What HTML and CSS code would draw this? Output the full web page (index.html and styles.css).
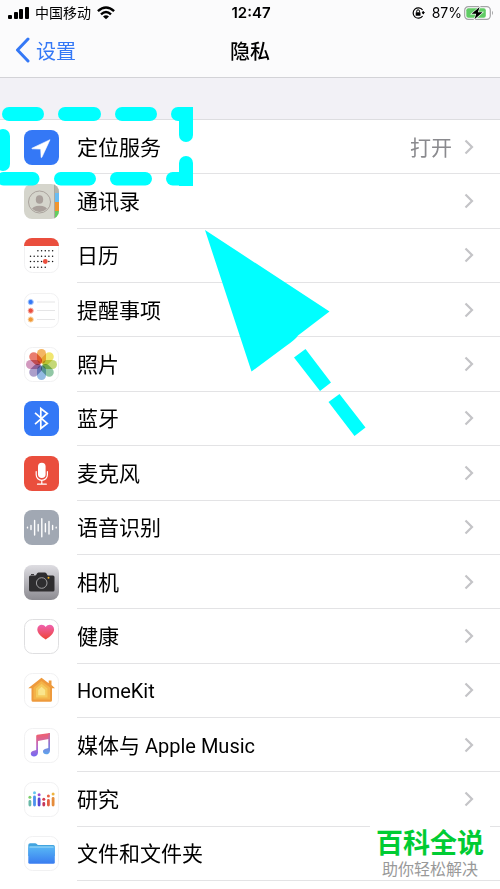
FILE: index.html
```html
<!DOCTYPE html>
<html lang="zh-CN">
<head>
<meta charset="utf-8">
<meta name="viewport" content="width=device-width, initial-scale=1">
<title>隐私</title>
<link rel="stylesheet" href="styles.css">
</head>
<body>
<div class="screen">
  <header class="top">
    <div class="status">
      <div class="status-left">
        <svg width="21" height="14" viewBox="0 0 21 14"><rect x="0" y="9" width="4" height="4" rx="1"/><rect x="6" y="6" width="4" height="7" rx="1"/><rect x="11" y="3" width="4" height="10" rx="1"/><rect x="17" y="1" width="4" height="12" rx="1"/></svg>
        <span class="carrier">中国移动</span>
        <svg width="18" height="14" viewBox="0 0 18 14" fill="none" stroke="#000" stroke-width="2.4"><path d="M.9 5.2Q9-2.4 17.1 5.2M4 8.4Q9 3.8 14 8.4"/><path d="M9 13.3L6 10.4Q9 8 12 10.4Z" fill="#000" stroke="none"/></svg>
      </div>
      <span class="clock">12:47</span>
      <div class="status-right">
        <svg width="13" height="12" viewBox="0 0 13 12"><path d="M10.6 3A5.2 5.2 0 1 0 10.6 9M11.2 7V4" fill="none" stroke="#000" stroke-width="1.2"/><path d="M9.6 5H13L11.3 7.5Z"/><rect x="3.7" y="5.2" width="4.8" height="3.6" rx=".5"/><path d="M4.7 5.4V4.2a1.4 1.4 0 0 1 2.8 0v1.2" fill="none" stroke="#000"/></svg>
        <span class="percent">87%</span>
        <svg width="30" height="14" viewBox="0 0 30 14"><rect x=".7" y=".7" width="25.6" height="12.6" rx="3.6" fill="#fff" stroke="#a4a4a6" stroke-width="1.2"/><rect x="2.3" y="2.3" width="19.5" height="9.4" rx="2" fill="#61cc65"/><path d="M28 4.8q2 2.2 0 4.4z" fill="#a4a4a6"/><path d="M15.6.9L7.600 7.800h4.600l-1.700 5.500 8-7h-4.600z" stroke="#fff" stroke-width="1.2" paint-order="stroke"/></svg>
      </div>
    </div>
    <nav class="nav">
      <a class="back" href="#"><svg width="15" height="26" viewBox="0 0 15 26"><path d="M13 2L2.5 13 13 24" fill="none" stroke="#3478f6" stroke-width="3" stroke-linecap="round" stroke-linejoin="round"/></svg><span>设置</span></a>
      <h1 class="title">隐私</h1>
    </nav>
  </header>

  <ul class="list">
    <li><a class="row" href="#">
      <svg class="icon" viewBox="0 0 35 35"><rect width="35" height="35" rx="8" fill="#3478f6"/><path d="M26 9.7L8 18.2q-.5.4.2.6l8.5.3.4 8.2q.3.8.8 0z" fill="#fff" stroke="#fff" stroke-width=".6" stroke-linejoin="round"/></svg>
      <span class="cell"><span class="label">定位服务</span><span class="value">打开</span><svg class="chevron" viewBox="0 0 10 16"><path d="M1.5 1.5L8 8l-6.500 6.500"/></svg></span></a></li>
    <li><a class="row" href="#">
      <svg class="icon" viewBox="0 0 35 35"><defs><clipPath id="tile"><rect width="35" height="35" rx="8"/></clipPath><clipPath id="face"><circle cx="15.500" cy="18" r="10"/></clipPath></defs><g clip-path="url(#tile)"><path fill="#d5d5cc" d="M0 0h35v35H0z"/><path fill="#b3b3aa" d="M30.500 0H35v9h-4.500z"/><path fill="#69bdf3" d="M31 9h4v9h-4z"/><path fill="#f1962f" d="M31 18h4v9h-4z"/><path fill="#65cd60" d="M31 27h4v8h-4z"/><path d="M30.500 0v35" stroke="#aaa9a0"/></g><circle cx="15.500" cy="18" r="11" fill="none" stroke="#aaa39d"/><g fill="#a9a09b" clip-path="url(#face)"><ellipse cx="15.500" cy="15.500" rx="3.700" ry="4.300"/><ellipse cx="15.500" cy="26.500" rx="8" ry="4.800"/></g></svg>
      <span class="cell"><span class="label">通讯录</span><svg class="chevron" viewBox="0 0 10 16"><path d="M1.5 1.5L8 8l-6.500 6.500"/></svg></span></a></li>
    <li><a class="row" href="#">
      <svg class="icon" viewBox="0 0 35 35"><rect class="tile" x=".5" y=".5" width="34" height="34" rx="8"/><path d="M0 8a8 8 0 0 1 8-8h19a8 8 0 0 1 8 8z" fill="#ea4e3d"/><g fill="none" stroke="#111" stroke-width="1.500" stroke-linecap="round" stroke-dasharray="0 3.680"><path d="M13.900 12.700h15M6.500 18.300h22.300M6.500 23.500h22.300M6.500 29.200h15"/></g><circle cx="21.300" cy="23.500" r="2.400" fill="#ea4e3d"/></svg>
      <span class="cell"><span class="label">日历</span><svg class="chevron" viewBox="0 0 10 16"><path d="M1.5 1.5L8 8l-6.500 6.500"/></svg></span></a></li>
    <li><a class="row" href="#">
      <svg class="icon" viewBox="0 0 35 35"><rect class="tile" x=".5" y=".5" width="34" height="34" rx="8"/><path d="M13 9h18M13 17.500h18M13 26.500h18" stroke="#dedee0" stroke-width=".8"/><g stroke-width="1"><circle cx="6.700" cy="9" r="2.600" fill="#3478f6" stroke="#a9c8fc"/><circle cx="6.700" cy="17.700" r="2.600" fill="#ea4e3d" stroke="#f7b8b1"/><circle cx="6.700" cy="26.500" r="2.600" fill="#f19a37" stroke="#fad7ae"/></g></svg>
      <span class="cell"><span class="label">提醒事项</span><svg class="chevron" viewBox="0 0 10 16"><path d="M1.5 1.5L8 8l-6.500 6.500"/></svg></span></a></li>
    <li><a class="row" href="#">
      <svg class="icon" viewBox="0 0 35 35"><rect class="tile" x=".5" y=".5" width="34" height="34" rx="8"/><g class="petals"><rect x="13" y="2" width="9" height="14.500" rx="4.500" fill="#f0a23b"/><rect x="13" y="2" width="9" height="14.500" rx="4.500" fill="#eee04c" transform="rotate(45 17.500 17.500)"/><rect x="13" y="2" width="9" height="14.500" rx="4.500" fill="#b5cf55" transform="rotate(90 17.500 17.500)"/><rect x="13" y="2" width="9" height="14.500" rx="4.500" fill="#75b98f" transform="rotate(135 17.500 17.500)"/><rect x="13" y="2" width="9" height="14.500" rx="4.500" fill="#78a9dc" transform="rotate(180 17.500 17.500)"/><rect x="13" y="2" width="9" height="14.500" rx="4.500" fill="#9686bd" transform="rotate(225 17.500 17.500)"/><rect x="13" y="2" width="9" height="14.500" rx="4.500" fill="#c77fae" transform="rotate(270 17.500 17.500)"/><rect x="13" y="2" width="9" height="14.500" rx="4.500" fill="#e45c4a" transform="rotate(315 17.500 17.500)"/></g></svg>
      <span class="cell"><span class="label">照片</span><svg class="chevron" viewBox="0 0 10 16"><path d="M1.5 1.5L8 8l-6.500 6.500"/></svg></span></a></li>
    <li><a class="row" href="#">
      <svg class="icon" viewBox="0 0 35 35"><rect width="35" height="35" rx="8" fill="#3478f6"/><path d="M11 11.800L23.300 22.500 16.800 27.500V7.500l6.500 5L11 23.200" fill="none" stroke="#fff" stroke-width="1.700"/></svg>
      <span class="cell"><span class="label">蓝牙</span><svg class="chevron" viewBox="0 0 10 16"><path d="M1.5 1.5L8 8l-6.500 6.500"/></svg></span></a></li>
    <li><a class="row" href="#">
      <svg class="icon" viewBox="0 0 35 35"><rect width="35" height="35" rx="8" fill="#ea4e3d"/><rect x="14" y="6.700" width="7.600" height="15.300" rx="3.800" fill="#fff"/><path d="M12.200 15.500v3.300a5.600 5.600 0 0 0 11.200 0v-3.300M17.800 24.500v3.700M13.500 28.200h8.800" fill="none" stroke="#fff" stroke-width="1.200" stroke-linecap="round"/></svg>
      <span class="cell"><span class="label">麦克风</span><svg class="chevron" viewBox="0 0 10 16"><path d="M1.5 1.5L8 8l-6.500 6.500"/></svg></span></a></li>
    <li><a class="row" href="#">
      <svg class="icon" viewBox="0 0 35 35"><rect width="35" height="35" rx="8" fill="#a1a8b3"/><path d="M3.500 17.300v.6M7 15.500v4M10.600 10.500v14.500M14.200 14.500v6.500M17.800 8.800v18M21.400 13.800v8M25 11.500v12.500M28.600 15.500v4M32.200 17.300v.6" stroke="#fff" stroke-width="1.400" stroke-linecap="round"/></svg>
      <span class="cell"><span class="label">语音识别</span><svg class="chevron" viewBox="0 0 10 16"><path d="M1.5 1.5L8 8l-6.500 6.500"/></svg></span></a></li>
    <li><a class="row" href="#">
      <svg class="icon" viewBox="0 0 35 35"><defs><linearGradient id="steel" x2="0" y2="1"><stop stop-color="#dedde2"/><stop offset="1" stop-color="#8c8b91"/></linearGradient></defs><rect width="35" height="35" rx="8" fill="url(#steel)"/><path d="M5 12q0-1.500 1.500-1.500h4.500q1.200 0 1.700-1.500t1.800-1.500h6.500q1.300 0 1.800 1.500t1.700 1.500h4.500q1.500 0 1.500 1.500v13q0 1.500-1.500 1.500h-22Q5 26.500 5 25z" fill="#2e2d2f"/><path d="M7 9.600h3" stroke="#2e2d2f"/><circle cx="17.700" cy="18" r="5.300" fill="none" stroke="#aaa9ac" stroke-width=".9"/><circle cx="24.500" cy="12.800" r="1" fill="#f2b01f"/></svg>
      <span class="cell"><span class="label">相机</span><svg class="chevron" viewBox="0 0 10 16"><path d="M1.5 1.5L8 8l-6.500 6.500"/></svg></span></a></li>
    <li><a class="row" href="#">
      <svg class="icon" viewBox="0 0 35 35"><defs><linearGradient id="heart" x2="0" y2="1"><stop stop-color="#ef62b0"/><stop offset="1" stop-color="#ee4434"/></linearGradient></defs><rect class="tile tile-strong" x=".5" y=".5" width="34" height="34" rx="8"/><path d="M21.700 20.500C17 17.500 13.300 14 13.300 10.500c0-5.200 6-6.300 8.400-2.500 2.400-3.800 8.400-2.700 8.400 2.500 0 3.500-3.700 7-8.400 10z" fill="url(#heart)"/></svg>
      <span class="cell"><span class="label">健康</span><svg class="chevron" viewBox="0 0 10 16"><path d="M1.5 1.5L8 8l-6.500 6.500"/></svg></span></a></li>
    <li><a class="row" href="#">
      <svg class="icon" viewBox="0 0 35 35"><rect class="tile" x=".5" y=".5" width="34" height="34" rx="8"/><path d="M17.500 4.700L4.200 15.300h3.300v12q0 1.500 1.500 1.500h17.500q1.500 0 1.500-1.500v-12h3L27.500 12V7.500h-2.800v2.800z" fill="#ee9a3c"/><path d="M17.500 8L9.500 14.500v12h16.500v-12z" fill="#f3b349"/><path d="M17.500 10.800L12 15.500v9h11.500v-9z" fill="#f6ca5c"/><path d="M17.500 13.700L14.200 17v5.200h7V17z" fill="#fae58c"/></svg>
      <span class="cell"><span class="label"><span class="latin">HomeKit</span></span><svg class="chevron" viewBox="0 0 10 16"><path d="M1.5 1.5L8 8l-6.500 6.500"/></svg></span></a></li>
    <li><a class="row" href="#">
      <svg class="icon" viewBox="0 0 35 35"><defs><linearGradient id="note" gradientUnits="userSpaceOnUse" x1="15" y1="5" x2="17" y2="29"><stop offset=".1" stop-color="#ec6075"/><stop offset=".55" stop-color="#b96cc9"/><stop offset="1" stop-color="#6d67f5"/></linearGradient><linearGradient id="note2" gradientUnits="userSpaceOnUse" x1="25" y1="5" x2="25" y2="27"><stop stop-color="#de6488"/><stop offset=".5" stop-color="#8c75d5"/><stop offset="1" stop-color="#58a9ef"/></linearGradient></defs><rect class="tile" x=".5" y=".5" width="34" height="34" rx="8"/><path d="M12.200 8q0-1 1-1.200L26 4.900v5.900l-12 2.300v11.500c0 5-7.200 5.200-7.200 1.200 0-3 3.500-2.700 5.400-3.700z" fill="url(#note)"/><path d="M24.300 5.200l1.700-.3v17.500c0 5-7 5-7 1.200 0-3 3.500-2.700 5.300-3.600z" fill="url(#note2)"/></svg>
      <span class="cell"><span class="label">媒体与<span class="latin"> Apple Music</span></span><svg class="chevron" viewBox="0 0 10 16"><path d="M1.5 1.5L8 8l-6.500 6.500"/></svg></span></a></li>
    <li><a class="row" href="#">
      <svg class="icon" viewBox="0 0 35 35"><rect class="tile" x=".5" y=".5" width="34" height="34" rx="8"/><g stroke-width="2.800" stroke-linecap="round"><path d="M5.900 19.500v3.500" stroke="#69b9a8"/><path d="M10.500 15v8" stroke="#4c90ed"/><path d="M15.100 17v6" stroke="#5948d2"/><path d="M19.800 21.500v1.500" stroke="#c4355a"/><path d="M24.400 18.500v4.500" stroke="#e36043"/><path d="M29.100 16.500v6.500" stroke="#e58c3b"/></g><circle cx="5.900" cy="15.300" r="1.500" fill="#7ecf6d"/><circle cx="10.500" cy="10.700" r="1.500" fill="#67c8ef"/><circle cx="15.100" cy="12.700" r="1.500" fill="#a34bd3"/><circle cx="19.800" cy="17.200" r="1.500" fill="#d73d51"/><circle cx="24.400" cy="14.100" r="1.500" fill="#ea6245"/><circle cx="29.100" cy="12.100" r="1.500" fill="#efb43e"/></svg>
      <span class="cell"><span class="label">研究</span><svg class="chevron" viewBox="0 0 10 16"><path d="M1.5 1.5L8 8l-6.500 6.500"/></svg></span></a></li>
    <li><a class="row" href="#">
      <svg class="icon" viewBox="0 0 35 35"><defs><linearGradient id="folder" x2="0" y2="1"><stop stop-color="#58b8f5"/><stop offset="1" stop-color="#397cf0"/></linearGradient></defs><rect class="tile" x=".5" y=".5" width="34" height="34" rx="8"/><path d="M4.300 9q0-1.800 1.800-1.800h5q1 0 1.700.9.500.9 1.500.9h15q1.500 0 1.500 1.500V20H4.300z" fill="#42a4df"/><rect x="4.300" y="10.500" width="26.500" height="17.300" rx="1.500" fill="url(#folder)"/><path d="M5.500 11h24" stroke="#a3dcf8"/></svg>
      <span class="cell"><span class="label">文件和文件夹</span><svg class="chevron" viewBox="0 0 10 16"><path d="M1.5 1.5L8 8l-6.500 6.500"/></svg></span></a></li>
  </ul>

  <svg class="callout" width="370" height="440" viewBox="0 0 370 440" aria-hidden="true">
    <defs><clipPath id="frame"><rect x="0" y="107" width="193" height="79"/></clipPath></defs>
    <g clip-path="url(#frame)">
      <rect x="2" y="107" width="42" height="14" rx="7"/><rect x="58" y="107" width="43" height="14" rx="7"/><rect x="115" y="107" width="42" height="14" rx="7"/><rect x="171" y="107" width="42" height="14" rx="7"/>
      <rect x="179" y="100" width="14" height="42" rx="7"/><rect x="179" y="156" width="14" height="42" rx="7"/>
      <rect x="-4" y="129" width="14" height="42" rx="7"/>
      <rect x="-3" y="172" width="42.500" height="13.500" rx="6.700"/><rect x="54" y="172" width="42" height="13.500" rx="6.700"/><rect x="110" y="172" width="42" height="13.500" rx="6.700"/><rect x="166" y="172" width="42" height="13.500" rx="6.700"/>
    </g>
    <path d="M205 230L329.500 311.500 298 335.500Q296 339 286 346L251.500 371.500zM305.500 349L331 382.500 320 391 294 357.500zM339.500 394L365.500 427.500 354.500 436 328.500 402z"/>
  </svg>

  <div class="watermark"><strong>百科全说</strong><span>助你轻松解决</span></div>
</div>
</body>
</html>
```
FILE: styles.css
```css
* { box-sizing: border-box; }

body {
  margin: 0;
  background: #fff;
  color: #000;
  font-family: Inter, "Noto Sans CJK SC", sans-serif;
}

svg { display: block; flex: none; }
a { color: inherit; text-decoration: none; }

.screen {
  position: relative;
  display: flex;
  flex-direction: column;
  min-height: 100vh;
  padding-bottom: 8px;
  overflow: hidden;
}

.top {
  background: #fbfbfc;
  border-bottom: 1px solid #d3d3d7;
}

.status {
  display: grid;
  grid-template-columns: 1fr auto 1fr;
  align-items: center;
  height: 25px;
  padding: 0 6px 0 8px;
  font-size: 14px;
  line-height: 24px;
}

.status-left,
.status-right {
  display: flex;
  align-items: center;
  gap: 6px;
}

.status-right { justify-content: flex-end; gap: 2px; }
.percent { padding-left: 5px; }
.clock { font-size: 15px; font-weight: 600; }

.nav {
  display: grid;
  grid-template-columns: 1fr auto 1fr;
  align-items: center;
  height: 52px;
  padding: 0 15px 2px;
  font-size: 20px;
}

.back {
  display: flex;
  align-items: center;
  gap: 6px;
  color: #3478f6;
}

.title {
  margin: 0;
  font-size: 20px;
  font-weight: 500;
}

.list {
  flex: 1;
  display: grid;
  grid-auto-rows: 1fr;
  margin: 0;
  padding: 1px 0 0;
  list-style: none;
  border-top: 41px solid #f2f1f6;
  box-shadow: inset 0 1px #dddde0;
}

.row {
  display: flex;
  align-items: center;
  gap: 18px;
  height: 100%;
  padding-left: 24px;
}

.icon { width: 35px; height: 35px; }
.tile { fill: #fff; stroke: #f1f1f2; }
.tile-strong { stroke: #dfdfe1; }
.petals rect { mix-blend-mode: multiply; opacity: 0.8; }

.cell {
  flex: 1;
  display: flex;
  align-items: center;
  align-self: stretch;
  padding-right: 26px;
  border-bottom: 1px solid #e3e3e5;
  font-size: 21px;
  line-height: 30px;
}

.label,
.value { padding-top: 2px; }
.label { flex: 1; }
.latin { font-family: Roboto, sans-serif; font-size: 20px; }
.value { margin-right: 12px; color: #8a8a8e; }
.chevron { width: 10px; height: 16px; }

.chevron path {
  fill: none;
  stroke: #c4c4c7;
  stroke-width: 2.2px;
}

.callout {
  position: absolute;
  top: 0;
  left: 0;
  fill: #0ff;
  pointer-events: none;
}

.watermark {
  position: absolute;
  right: 10px;
  bottom: 10px;
  display: flex;
  flex-direction: column;
  align-items: center;
  width: 120px;
  padding-top: 4px;
  background: #fff;
  color: #999;
  font-size: 16px;
  line-height: 20px;
}

.watermark strong {
  color: #0c3;
  font-size: 27px;
  font-weight: 700;
  line-height: 30px;
}
```
